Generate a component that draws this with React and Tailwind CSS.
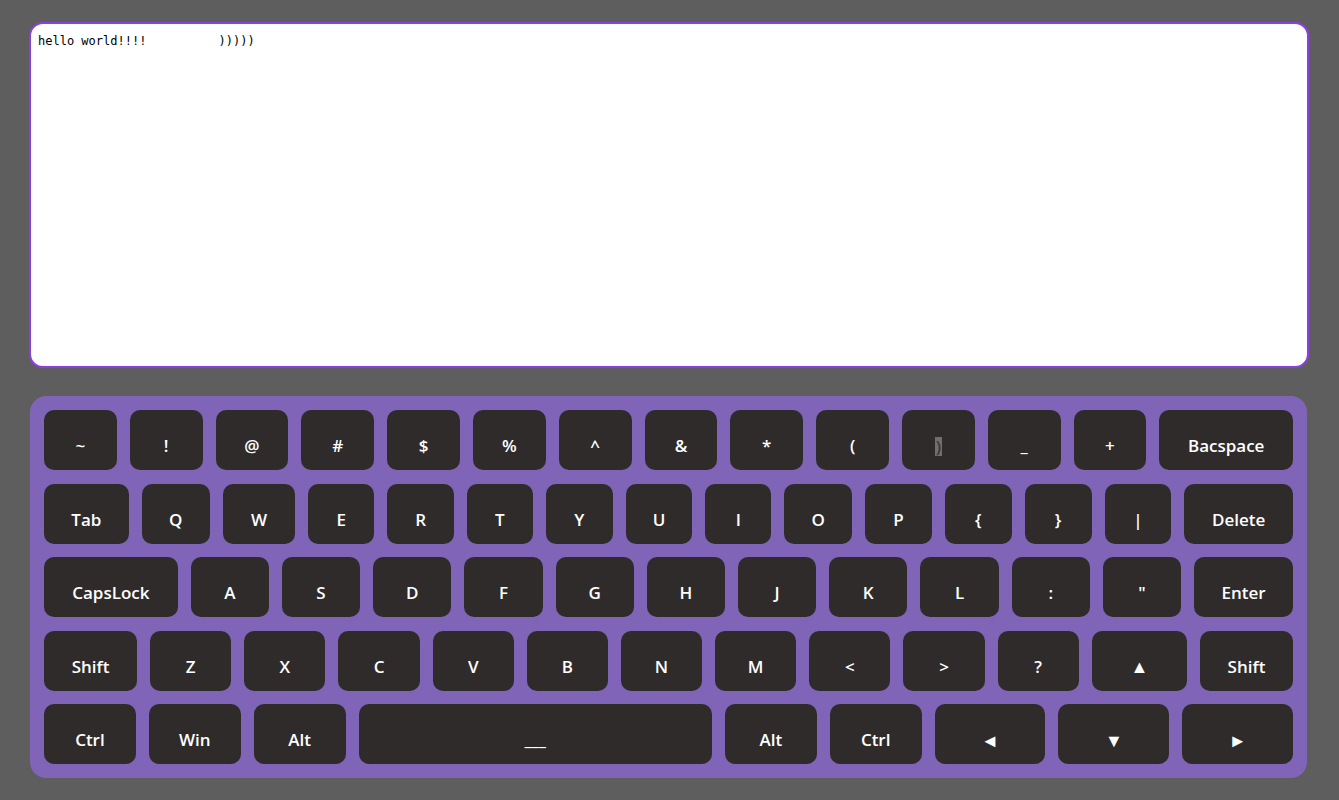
import { useState } from 'react'

const rows = [
  [
    ['~', 'grow-[73]'], ['!', 'grow-[73]'], ['@', 'grow-[73]'], ['#', 'grow-[73]'], ['$', 'grow-[73]'],
    ['%', 'grow-[73]'], ['^', 'grow-[73]'], ['&', 'grow-[73]'], ['*', 'grow-[73]'], ['(', 'grow-[73]'],
    [')', 'grow-[73]', true], ['_', 'grow-[73]'], ['+', 'grow-[73]'], ['Bacspace', 'grow-[134]'],
  ],
  [
    ['Tab', 'grow-[85]'], ['Q', 'grow-[68]'], ['W', 'grow-[73]'], ['E', 'grow-[66]'], ['R', 'grow-[67]'],
    ['T', 'grow-[66]'], ['Y', 'grow-[67]'], ['U', 'grow-[67]'], ['I', 'grow-[66]'], ['O', 'grow-[68]'],
    ['P', 'grow-[67]'], ['{', 'grow-[67]'], ['}', 'grow-[67]'], ['|', 'grow-[67]'], ['Delete', 'grow-[109]'],
  ],
  [
    ['CapsLock', 'grow-[135]'], ['A', 'grow-[79]'], ['S', 'grow-[79]'], ['D', 'grow-[79]'], ['F', 'grow-[79]'],
    ['G', 'grow-[79]'], ['H', 'grow-[79]'], ['J', 'grow-[79]'], ['K', 'grow-[79]'], ['L', 'grow-[79]'],
    [':', 'grow-[79]'], ['"', 'grow-[79]'], ['Enter', 'grow-[100]'],
  ],
  [
    ['Shift', 'grow-[93]'], ['Z', 'grow-[81]'], ['X', 'grow-[81]'], ['C', 'grow-[81]'], ['V', 'grow-[81]'],
    ['B', 'grow-[81]'], ['N', 'grow-[81]'], ['M', 'grow-[81]'], ['<', 'grow-[81]'], ['>', 'grow-[81]'],
    ['?', 'grow-[81]'], ['▲', 'grow-[95]'], ['Shift', 'grow-[93]'],
  ],
  [
    ['Ctrl', 'grow-[92]'], ['Win', 'grow-[92]'], ['Alt', 'grow-[92]'], ['___', 'grow-[354]'], ['Alt', 'grow-[92]'],
    ['Ctrl', 'grow-[92]'], ['◄', 'grow-[111]'], ['▼', 'grow-[111]'], ['►', 'grow-[111]'],
  ],
]

function Key({ label, grow, selected }) {
  const arrow = label.length === 1 && '▲▼◄►'.includes(label)
  return (
    <div className={`${grow} basis-0 h-[60px] rounded-[10px] bg-[#2f2b2b] flex items-center justify-center pt-3 text-white font-semibold ${arrow ? 'text-[18px]' : 'text-[17px]'}`}>
      {selected ? (
        <span className="bg-[#6f6f6f] text-[#3b3838] leading-[19px] px-[1px]">{label}</span>
      ) : (
        <span>{label}</span>
      )}
    </div>
  )
}

export default function App() {
  const [text, setText] = useState('hello world!!!!          )))))')

  return (
    <div className="min-h-screen bg-[#5e5e5e] pt-[22px] pl-[29px] pr-[30px] pb-[22px]">
      <textarea
        value={text}
        onChange={e => setText(e.target.value)}
        className="block w-full h-[346px] bg-white border-2 border-[#8b3fe3] rounded-[14px] px-[7px] pt-[10px] pb-[8px] text-[12px] leading-[15px] text-black resize-none outline-none"
        style={{ fontFamily: '"DejaVu Sans Mono", monospace' }}
      />

      <div
        className="mt-[28px] ml-px mr-[2px] bg-[#8064b8] rounded-[16px] p-[14px] flex flex-col gap-[13.5px]"
        style={{ fontFamily: '"Open Sans", sans-serif' }}
      >
        {rows.map((row, i) => (
          <div key={i} className="flex gap-[13px]">
            {row.map(([label, grow, selected], j) => (
              <Key key={j} label={label} grow={grow} selected={selected} />
            ))}
          </div>
        ))}
      </div>
    </div>
  )
}
